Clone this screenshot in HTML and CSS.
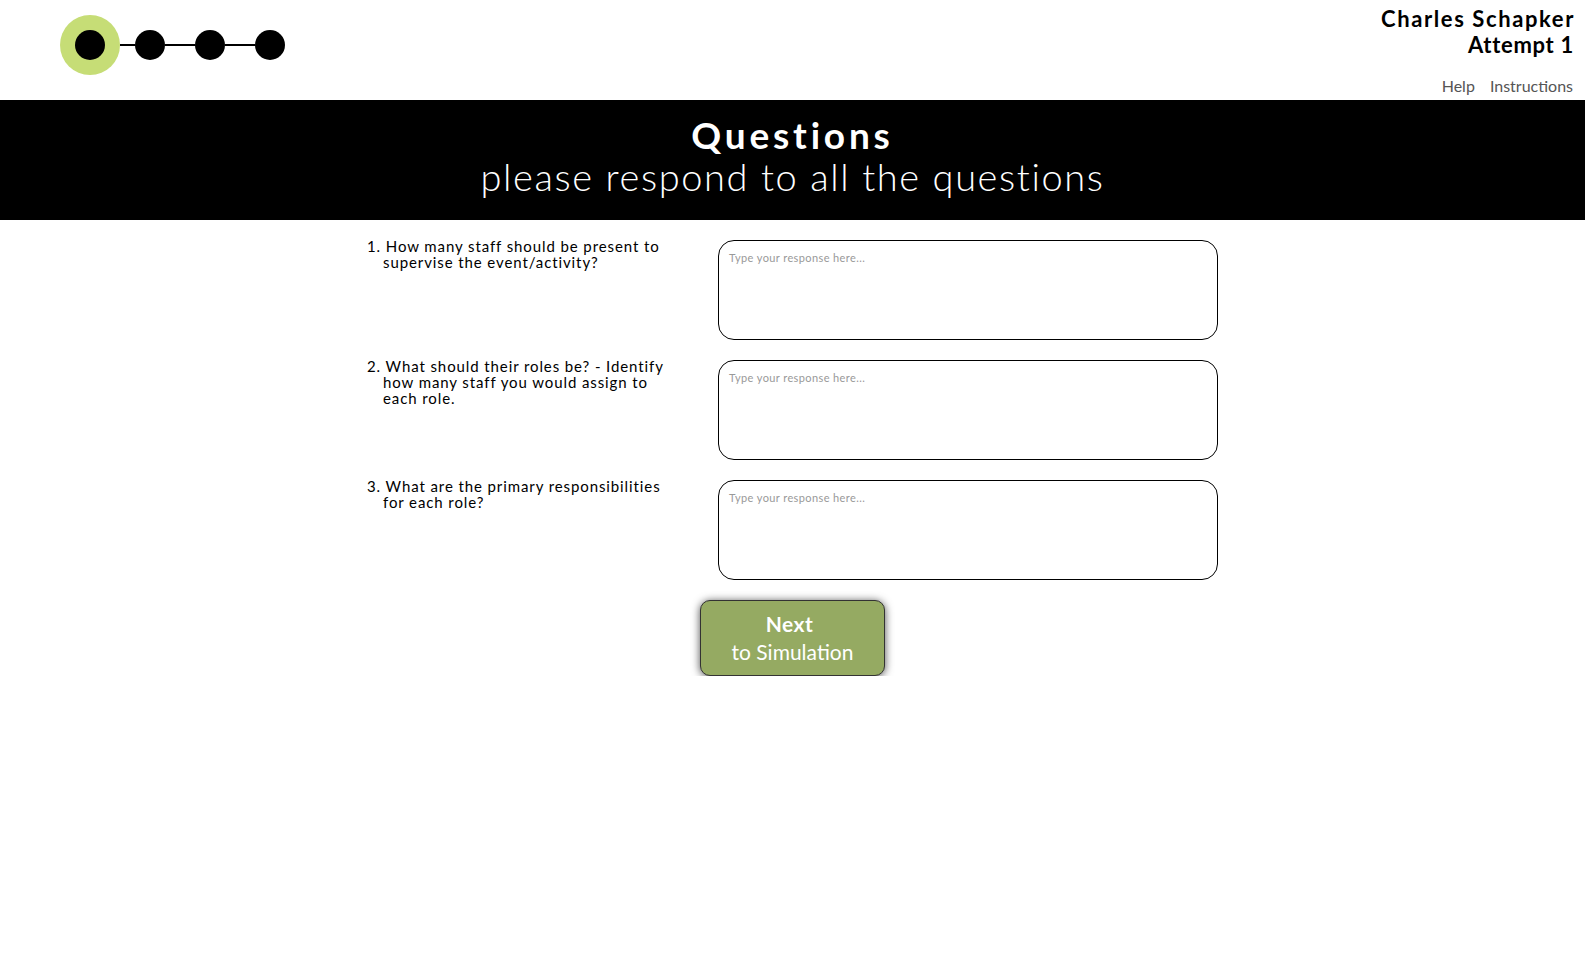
FILE: index.html
```html
<!DOCTYPE html>
<html lang="en">
  <head>
    <meta charset="UTF-8" />
    <meta name="viewport" content="width=device-width, initial-scale=1.0" />
    <title>Questions</title>
    <link rel="stylesheet" href="styles.css">
  </head>
  <body>
    <div class="topbar">
      <div class="progress">
        <div class="step current"><div class="dot"></div></div>
        <div class="link short"></div>
        <div class="dot"></div>
        <div class="link"></div>
        <div class="dot"></div>
        <div class="link"></div>
        <div class="dot"></div>
      </div>
      <div class="user">
        <div class="name">Charles Schapker</div>
        <div class="name attempt">Attempt 1</div>
        <div class="menu">
          <a href="#">Help</a>
          <a href="#">Instructions</a>
        </div>
      </div>
    </div>

    <div class="banner">
      <h1>Questions</h1>
      <p>please respond to all the questions</p>
    </div>

    <div class="questions">
      <div class="question">1. How many staff should be present to supervise the event/activity?</div>
      <textarea placeholder="Type your response here..."></textarea>

      <div class="question">2. What should their roles be? - Identify how many staff you would assign to each role.</div>
      <textarea placeholder="Type your response here..."></textarea>

      <div class="question">3. What are the primary responsibilities for each role?</div>
      <textarea placeholder="Type your response here..."></textarea>
    </div>

    <div class="actions">
      <button class="next"><strong>Next</strong><span>to Simulation</span></button>
    </div>
  </body>
</html>
```

FILE: styles.css
```css
body {
  margin: 0;
  font-family: Lato, "Open Sans", sans-serif;
  color: #000;
  background: #fff;
}
.topbar {
  display: flex;
  justify-content: space-between;
  height: 100px;
  padding: 0 10px 0 60px;
}
.progress {
  display: flex;
  align-items: center;
  height: 60px;
  margin-top: 15px;
}
.step.current {
  width: 60px;
  height: 60px;
  border-radius: 50%;
  background-color: #c6dd76;
  display: flex;
  align-items: center;
  justify-content: center;
}
.dot {
  width: 30px;
  height: 30px;
  border-radius: 50%;
  background-color: #000;
}
.link {
  width: 30px;
  height: 2px;
  background-color: #000;
}
.link.short {
  width: 15px;
}
.user {
  text-align: right;
  padding-top: 6px;
}
.name {
  font-size: 22px;
  font-weight: 700;
  line-height: 26px;
  letter-spacing: 1.6px;
}
.name.attempt {
  letter-spacing: 0.7px;
  padding-right: 1px;
}
.menu {
  margin-top: 18px;
  display: flex;
  justify-content: flex-end;
  gap: 15px;
  padding-right: 2px;
}
.menu a {
  color: #555;
  font-size: 16px;
  text-decoration: none;
}
.banner {
  background-color: #000;
  color: #fff;
  text-align: center;
  height: 120px;
  box-sizing: border-box;
  padding-top: 14px;
}
.banner h1 {
  margin: 0;
  font-size: 37px;
  line-height: 42px;
  font-weight: 700;
  letter-spacing: 3.8px;
}
.banner p {
  margin: 0;
  font-size: 38px;
  line-height: 40px;
  font-weight: 300;
  letter-spacing: 1.6px;
}
.questions {
  display: grid;
  grid-template-columns: 351px 500px;
  row-gap: 20px;
  width: 851px;
  margin: 20px auto 0;
}
.question {
  font-size: 15px;
  line-height: 16px;
  margin-top: -2px;
  padding-left: 16px;
  padding-right: 40px;
  text-indent: -16px;
  letter-spacing: 0.9px;
}
textarea {
  height: 100px;
  box-sizing: border-box;
  border: 1px solid #000;
  border-radius: 16px;
  padding: 10px;
  font-family: Lato, sans-serif;
  font-size: 11px;
  letter-spacing: 0.4px;
  resize: none;
}
textarea::placeholder {
  color: #999;
}
.actions {
  display: flex;
  justify-content: center;
  margin-top: 20px;
}
.next {
  width: 185px;
  height: 76px;
  background-color: #95aa62;
  color: #fff;
  border: 1px solid #333;
  border-radius: 10px;
  box-shadow: 0 1px 8px rgba(0, 0, 0, 0.7);
  display: flex;
  flex-direction: column;
  align-items: center;
  justify-content: center;
  font-family: Lato, sans-serif;
  font-size: 21px;
  line-height: 28px;
  cursor: pointer;
}
.next strong {
  letter-spacing: 0.5px;
  margin-left: -6px;
}
```
